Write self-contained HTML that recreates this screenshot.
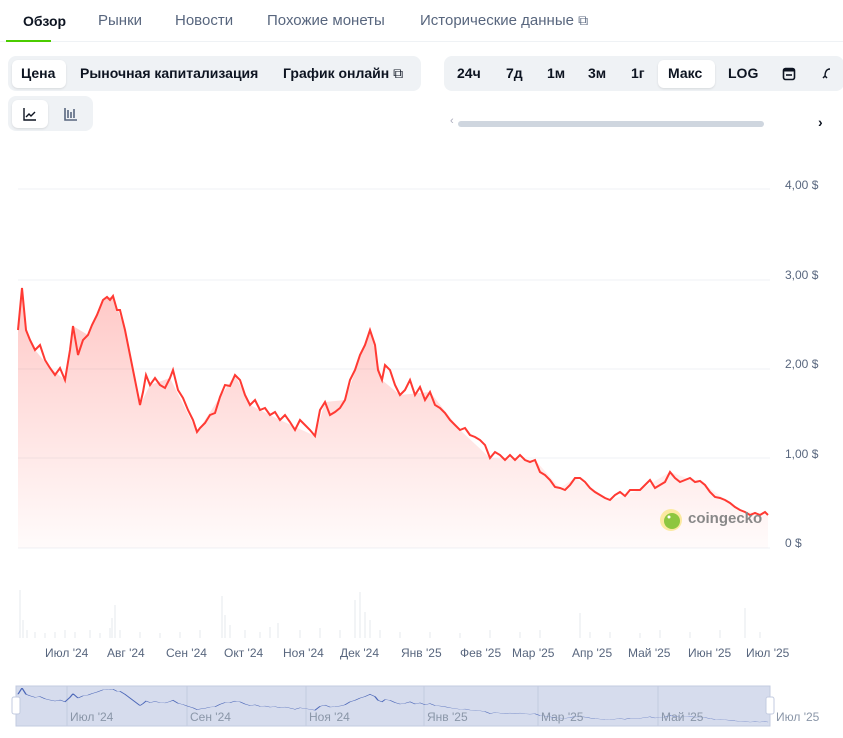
<!DOCTYPE html>
<html><head><meta charset="utf-8"><style>
*{margin:0;padding:0;box-sizing:border-box}
body{width:843px;height:738px;background:#fff;font-family:"Liberation Sans",sans-serif;position:relative;overflow:hidden;color:#0d1421}
.a{position:absolute;white-space:nowrap}
.tab{top:12px;font-size:15px;color:#58667e}
.grp{background:#eff2f5;border-radius:8px}
.pill{background:#fff;border-radius:6px;box-shadow:0 1px 2px rgba(0,0,0,.1)}
.b{font-size:14px;font-weight:bold;color:#0d1421;top:65px}
.yl{font-size:12px;color:#58667e;left:785px}
.xl{font-size:12px;color:#58667e;top:646px}
.nl{font-size:12px;color:#8a96a8;top:710px}
</style></head><body>
<div class="a tab" style="left:23px;color:#0d1421;font-weight:bold;font-size:14px;top:13px">Обзор</div>
<div class="a tab" style="left:98px">Рынки</div>
<div class="a tab" style="left:175px">Новости</div>
<div class="a tab" style="left:267px">Похожие монеты</div>
<div class="a tab" style="left:420px">Исторические данные <span style="font-size:14px">⧉</span></div>
<div class="a" style="left:0;top:41px;width:843px;height:1px;background:#eff2f5"></div>
<div class="a" style="left:6px;top:40px;width:45px;height:2px;background:#4bcc00"></div>

<div class="a grp" style="left:8px;top:56px;width:413px;height:35px"></div>
<div class="a pill" style="left:12px;top:60px;width:54px;height:28px"></div>
<div class="a b" style="left:21px">Цена</div>
<div class="a b" style="left:80px">Рыночная капитализация</div>
<div class="a b" style="left:283px">График онлайн <span style="font-weight:normal">⧉</span></div>

<div class="a grp" style="left:444px;top:56px;width:400px;height:35px"></div>
<div class="a pill" style="left:658px;top:60px;width:57px;height:28px"></div>
<div class="a b" style="left:457px">24ч</div>
<div class="a b" style="left:506px">7д</div>
<div class="a b" style="left:547px">1м</div>
<div class="a b" style="left:588px">3м</div>
<div class="a b" style="left:631px">1г</div>
<div class="a b" style="left:668px">Макс</div>
<div class="a b" style="left:728px">LOG</div>
<svg class="a" style="left:782px;top:66px" width="14" height="15"><rect x="1.5" y="2.5" width="11" height="11" rx="2" fill="none" stroke="#0d1421" stroke-width="1.6"/><rect x="1.5" y="2.5" width="11" height="3" fill="#0d1421"/><line x1="4" y1="9" x2="10" y2="9" stroke="#0d1421" stroke-width="1.6"/></svg>
<svg class="a" style="left:822px;top:66px" width="10" height="15"><path d="M8 3C4 3 3 7 3 10M1 12L3 10L5 12" fill="none" stroke="#0d1421" stroke-width="1.5"/></svg>

<div class="a grp" style="left:8px;top:96px;width:85px;height:35px"></div>
<div class="a pill" style="left:12px;top:100px;width:36px;height:28px"></div>
<svg class="a" style="left:22px;top:106px" width="16" height="16"><path d="M2 2V14H14" fill="none" stroke="#0d1421" stroke-width="1.4"/><path d="M4 11L7 8L9 10L13 6" fill="none" stroke="#0d1421" stroke-width="1.4"/></svg>
<svg class="a" style="left:63px;top:106px" width="16" height="16"><path d="M2 2V14H14M5 4V12M8 6V12M11 3V12" fill="none" stroke="#58667e" stroke-width="1.6"/></svg>

<div class="a" style="left:450px;top:115px;font-size:11px;color:#aab">‹</div>
<div class="a" style="left:458px;top:121px;width:306px;height:6px;border-radius:3px;background:#cfd6df"></div>
<div class="a" style="left:818px;top:114px;font-size:14px;font-weight:bold">›</div>

<svg class="a" style="left:0;top:0" width="843" height="738">
<defs>
<linearGradient id="g" x1="0" y1="0" x2="0" y2="1"><stop offset="0" stop-color="#ff3a33" stop-opacity=".28"/><stop offset="1" stop-color="#ff3a33" stop-opacity=".02"/></linearGradient>
<path id="p" d="M18,330L22,288L26,330L30,340L35,350L40,345L45,360L50,368L55,375L60,368L65,380L70,350L73,326L78,355L83,340L88,335L92,325L97,315L103,300L107,297L110,300L113,296L117,310L120,310L125,330L130,355L135,380L140,405L143,392L146,375L150,385L155,378L160,385L165,388L170,378L173,370L178,390L183,398L188,410L193,420L197,432L200,428L205,423L210,415L215,413L220,397L225,385L230,386L235,375L240,380L245,395L250,405L255,400L260,410L265,408L270,415L275,412L280,420L285,415L290,422L295,430L300,420L305,425L310,430L315,436L320,410L325,402L330,415L335,412L340,408L345,400L350,380L355,370L360,355L365,345L370,330L375,345L378,370L382,380L385,365L390,370L395,385L400,395L405,390L410,380L415,395L420,387L425,400L430,392L435,405L440,408L445,413L450,420L455,425L460,430L465,428L470,435L475,437L480,440L485,445L490,458L495,452L500,455L505,460L510,455L515,460L520,455L525,460L530,462L535,460L540,472L545,475L550,480L555,487L560,488L565,490L570,485L575,478L580,478L585,482L590,488L595,492L600,495L605,498L610,500L615,495L620,492L625,496L630,490L635,490L640,490L645,485L650,480L655,488L660,485L665,482L670,472L675,478L680,482L685,480L690,478L695,482L700,481L705,485L710,492L715,497L720,498L725,500L730,503L735,507L740,510L745,512L750,515L755,513L760,515L765,512L768,515"/>
</defs>
<g stroke="#eff2f5" stroke-width="1"><line x1="18" y1="189" x2="770" y2="189"/><line x1="18" y1="280" x2="770" y2="280"/><line x1="18" y1="369" x2="770" y2="369"/><line x1="18" y1="458" x2="770" y2="458"/><line x1="18" y1="548" x2="770" y2="548"/></g>
<path fill="url(#g)" d="M18,548L18,330L22,288L26,330L35,350L50,368L65,380L73,326L88,335L103,300L113,296L125,330L140,405L150,385L170,378L197,432L220,397L235,375L250,405L280,420L315,436L325,402L345,400L370,330L382,380L400,395L430,392L460,430L490,458L535,460L560,488L575,478L610,500L640,490L670,472L705,485L740,510L768,515L768,548Z"/>
<use href="#p" fill="none" stroke="#ff3a33" stroke-width="2"/>
<g stroke="#e6e9ee" stroke-width="1">
<path d="M20,638V590M23,638V620M27,638V630M35,638V632M45,638V633M55,638V632M65,638V630M75,638V632M90,638V630M100,638V633M110,638V628M112,638V618M115,638V605M120,638V630M140,638V632M160,638V633M180,638V632M200,638V630M222,638V596M225,638V615M230,638V625M245,638V630M260,638V632M270,638V627M278,638V623M300,638V630M320,638V628M340,638V630M355,638V600M360,638V592M365,638V612M370,638V620M380,638V630M400,638V632M430,638V632M460,638V633M490,638V630M520,638V632M540,638V630M580,638V613M590,638V632M610,638V632M640,638V633M660,638V630M690,638V632M720,638V630M745,638V608M760,638V632"/>
</g>
<rect x="16" y="686" width="754" height="40" fill="#d6dced" stroke="#c3cbe0"/>
<g stroke="#c3cbe0"><line x1="67" y1="686" x2="67" y2="726"/><line x1="187" y1="686" x2="187" y2="726"/><line x1="306" y1="686" x2="306" y2="726"/><line x1="424" y1="686" x2="424" y2="726"/><line x1="538" y1="686" x2="538" y2="726"/><line x1="658" y1="686" x2="658" y2="726"/></g>
<g transform="translate(0,644.8) scale(1,0.15)"><use href="#p" fill="none" stroke="#4d68b8" stroke-width="1.5" vector-effect="non-scaling-stroke"/></g>
<rect x="12" y="697" width="8" height="17" rx="2" fill="#fff" stroke="#c3cbe0"/>
<rect x="766" y="697" width="8" height="17" rx="2" fill="#fff" stroke="#c3cbe0"/>
<circle cx="671" cy="520" r="11" fill="#fbe9a0"/><circle cx="672" cy="521" r="8" fill="#8dc63f"/><circle cx="669" cy="517" r="1.5" fill="#fff"/>
</svg>
<div class="a" style="left:688px;top:510px;font-size:15px;font-weight:bold;color:#888">coingecko</div>

<div class="a yl" style="top:178px">4,00 $</div>
<div class="a yl" style="top:268px">3,00 $</div>
<div class="a yl" style="top:357px">2,00 $</div>
<div class="a yl" style="top:447px">1,00 $</div>
<div class="a yl" style="top:536px">0 $</div>

<div class="a xl" style="left:45px">Июл '24</div>
<div class="a xl" style="left:107px">Авг '24</div>
<div class="a xl" style="left:166px">Сен '24</div>
<div class="a xl" style="left:224px">Окт '24</div>
<div class="a xl" style="left:283px">Ноя '24</div>
<div class="a xl" style="left:340px">Дек '24</div>
<div class="a xl" style="left:401px">Янв '25</div>
<div class="a xl" style="left:460px">Фев '25</div>
<div class="a xl" style="left:512px">Мар '25</div>
<div class="a xl" style="left:572px">Апр '25</div>
<div class="a xl" style="left:628px">Май '25</div>
<div class="a xl" style="left:688px">Июн '25</div>
<div class="a xl" style="left:746px">Июл '25</div>

<div class="a nl" style="left:70px">Июл '24</div>
<div class="a nl" style="left:190px">Сен '24</div>
<div class="a nl" style="left:309px">Ноя '24</div>
<div class="a nl" style="left:427px">Янв '25</div>
<div class="a nl" style="left:541px">Мар '25</div>
<div class="a nl" style="left:661px">Май '25</div>
<div class="a nl" style="left:776px">Июл '25</div>
</body></html>
